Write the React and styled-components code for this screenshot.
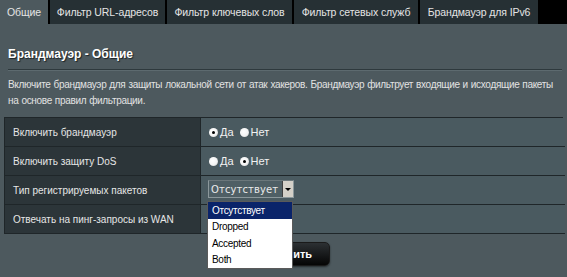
import React from "react";
import styled, { createGlobalStyle } from "styled-components";

const Global = createGlobalStyle`
  html, body { margin: 0; padding: 0; }
  body {
    background: #4d595e;
    font-family: "Liberation Sans", Arial, sans-serif;
    width: 567px;
    height: 277px;
    overflow: hidden;
  }
`;

const Page = styled.div`
  position: relative;
  width: 567px;
  height: 277px;
  background: #4d595e;
`;

const TabBar = styled.div`
  display: flex;
  height: 24px;
  background: #000;
  gap: 2px;
`;

const Tab = styled.div`
  width: ${(p) => p.$w}px;
  display: flex;
  align-items: center;
  justify-content: center;
  font-size: 10.5px;
  letter-spacing: -0.1px;
  color: #e4e4e4;
  background: ${(p) => (p.$active ? "#4d595e" : "#263034")};
  white-space: nowrap;
  padding-bottom: 1px;
  box-sizing: border-box;
`;

const Content = styled.div`
  padding: 0 4px 0 4px;
`;

const Title = styled.h1`
  margin: 0;
  padding: 21px 0 0 4px;
  height: 23px;
  font-size: 12px;
  font-weight: bold;
  color: #fff;
  text-shadow: 1px 1px 1px #1c2326;
  line-height: 18px;
`;

const Divider = styled.div`
  margin: 1px 0 0 4px;
  height: 1px;
  width: 554px;
  background: #2e393d;
  border-bottom: 1px solid #5d6a6f;
`;

const Description = styled.p`
  margin: 0;
  padding: 6px 0 0 4px;
  font-size: 10px;
  line-height: 16px;
  color: #e2e2e2;
  height: 40px;
  letter-spacing: -0.32px;
  word-spacing: 0.5px;
`;

const Table = styled.div`
  display: grid;
  grid-template-columns: 196px 364px;
  border: 1px solid #1f2629;
  border-bottom: none;
`;

const LabelCell = styled.div`
  background: #2c3539;
  height: 28px;
  display: flex;
  align-items: center;
  padding-left: 8px;
  font-size: 10px;
  color: #e6e6e6;
  border-bottom: 1px solid #1f2629;
  border-right: 1px solid #1f2629;
`;

const ValueCell = styled.div`
  background: #4a5a60;
  height: 28px;
  display: flex;
  align-items: center;
  padding-left: 8px;
  font-size: 10px;
  color: #f0f0f0;
  border-bottom: 1px solid #1f2629;
`;

const RadioLabel = styled.label`
  display: flex;
  align-items: center;
  margin-right: 6px;
  font-size: 11px;
  color: #f2f2f2;
`;

const RadioDot = styled.span`
  width: 9px;
  height: 9px;
  border-radius: 50%;
  background: radial-gradient(circle at 40% 40%, #ffffff 0%, #f4f4f4 55%, #bfbfbf 100%);
  margin-right: 2px;
  display: flex;
  align-items: center;
  justify-content: center;
  &::after {
    content: "";
    display: ${(p) => (p.$checked ? "block" : "none")};
    width: 3px;
    height: 3px;
    border-radius: 50%;
    background: #000;
  }
`;

const Select = styled.div`
  display: flex;
  align-items: stretch;
  width: 86px;
  height: 18px;
  margin-left: -1px;
  margin-top: -2px;
  box-sizing: border-box;
  border: 1px solid #8b979b;
  border-top-color: #6b777b;
  background: #4f5f65;
`;

const SelectText = styled.div`
  flex: 1;
  display: flex;
  align-items: center;
  padding-left: 2px;
  font-family: "DejaVu Sans", Verdana, sans-serif;
  font-size: 10px;
  color: #eaeaea;
  letter-spacing: 0.1px;
`;

const SelectArrow = styled.div`
  width: 10px;
  background: #d4d0c8;
  border-left: 1px solid #404040;
  display: flex;
  align-items: center;
  justify-content: center;
  &::after {
    content: "";
    border-left: 3px solid transparent;
    border-right: 3px solid transparent;
    border-top: 3px solid #000;
  }
`;

const ButtonRow = styled.div`
  display: flex;
  justify-content: center;
  padding: 8px 0 0 0;
`;

const Button = styled.button`
  width: 96px;
  height: 24px;
  border-radius: 5px;
  border: 1px solid #1a1a1a;
  background: linear-gradient(#2c3033, #050505);
  color: #fff;
  font-family: "Liberation Sans", Arial, sans-serif;
  font-size: 11px;
  font-weight: bold;
  box-shadow: 0 1px 2px rgba(0,0,0,0.5);
  margin-left: -4px;
`;

const ListBox = styled.ul`
  position: absolute;
  left: 207px;
  top: 201px;
  width: 86px;
  margin: 0;
  padding: 0;
  list-style: none;
  background: #fff;
  border: 1px solid #5a5a5a;
  box-sizing: border-box;
`;

const Option = styled.li`
  height: 16.5px;
  display: flex;
  align-items: center;
  padding-left: 4px;
  font-size: 10px;
  letter-spacing: -0.3px;
  color: ${(p) => (p.$selected ? "#fff" : "#000")};
  background: ${(p) => (p.$selected ? "#0a246a" : "#fff")};
`;

const tabs = [
  { t: "Общие", w: 48, active: true },
  { t: "Фильтр URL-адресов", w: 115 },
  { t: "Фильтр ключевых слов", w: 125 },
  { t: "Фильтр сетевых служб", w: 124 },
  { t: "Брандмауэр для IPv6", w: 118 },
];

function Radio({ checked, label }) {
  return (
    <RadioLabel>
      <RadioDot $checked={checked} />
      {label}
    </RadioLabel>
  );
}

export default function App() {
  return (
    <Page>
      <Global />
      <TabBar>
        {tabs.map((t) => (
          <Tab key={t.t} $w={t.w} $active={t.active}>
            {t.t}
          </Tab>
        ))}
      </TabBar>
      <Content>
        <Title>Брандмауэр - Общие</Title>
        <Divider />
        <Description>
          Включите брандмауэр для защиты локальной сети от атак хакеров. Брандмауэр фильтрует входящие и исходящие пакеты на основе правил фильтрации.
        </Description>
        <Table>
          <LabelCell>Включить брандмауэр</LabelCell>
          <ValueCell>
            <Radio checked label="Да" />
            <Radio label="Нет" />
          </ValueCell>
          <LabelCell>Включить защиту DoS</LabelCell>
          <ValueCell>
            <Radio label="Да" />
            <Radio checked label="Нет" />
          </ValueCell>
          <LabelCell>Тип регистрируемых пакетов</LabelCell>
          <ValueCell>
            <Select>
              <SelectText>Отсутствует</SelectText>
              <SelectArrow />
            </Select>
          </ValueCell>
          <LabelCell>Отвечать на пинг-запросы из WAN</LabelCell>
          <ValueCell />
        </Table>
        <ButtonRow>
          <Button>Применить</Button>
        </ButtonRow>
      </Content>
      <ListBox>
        <Option $selected>Отсутствует</Option>
        <Option>Dropped</Option>
        <Option>Accepted</Option>
        <Option>Both</Option>
      </ListBox>
    </Page>
  );
}
